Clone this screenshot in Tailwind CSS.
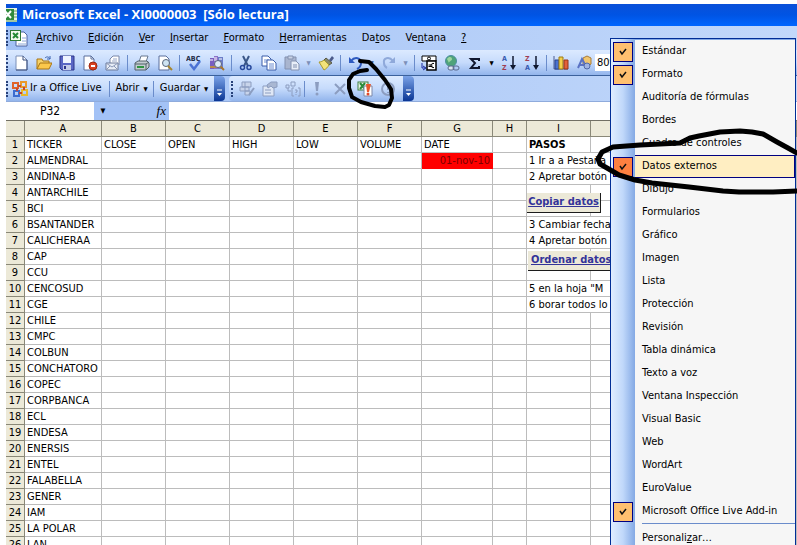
<!DOCTYPE html>
<html lang="es">
<head>
  <meta charset="UTF-8">
  <meta name="viewport" content="width=device-width, initial-scale=1.0">
  <title>Microsoft Excel - XI0000003</title>
  <script src="https://cdn.jsdelivr.net/npm/@tailwindcss/browser@4"></script>
</head>
<body class="relative h-screen overflow-hidden bg-white pl-1.5 pt-1 font-['DejaVu_Sans_Condensed','DejaVu_Sans',sans-serif] text-[11px] text-black">

  <!-- Title bar -->
  <header class="flex h-[22px] items-center gap-1 overflow-hidden bg-linear-to-b from-[#0a50d8] via-[#0054e4] to-[#0066ff]">
    <svg class="-ml-1 h-4 w-4 shrink-0" viewBox="0 0 16 16"><rect x="1" y="1" width="14" height="14" fill="#e8f3e4"/><rect x="1" y="2" width="11" height="11" fill="#2f8a3c"/><path d="M3 4l6 7M9 4l-6 7" stroke="#fff" stroke-width="2"/><path d="M12 4h3M12 7h3M12 10h3M4 14h11" stroke="#5a9a60"/></svg>
    <h1 class="whitespace-pre font-['Open_Sans','Noto_Sans',sans-serif] text-[13px] font-bold text-white">Microsoft Excel - XI0000003  [Sólo lectura]</h1>
  </header>

  <!-- Menu bar -->
  <nav class="flex h-6 items-center bg-linear-to-r from-[#a3c2f6] to-[#c2d8fa]">
    <span class="h-4 w-1 border-l-2 border-dotted border-[#27417a]"></span>
    <svg class="mr-2 h-[18px] w-[18px]" viewBox="0 0 18 18"><path d="M6 3h8l3 3v11H6z" fill="#fff" stroke="#4a62a0"/><path d="M12 9h4M12 12h4M8 15h8" stroke="#8aa6d8"/><rect x=".5" y="1.500" width="10" height="10" fill="#f2faee" stroke="#2f7a36"/><path d="M3 4l5 5M8 4l-5 5" stroke="#248a34" stroke-width="2"/></svg>
    <div class="flex gap-[15px]">
      <a href="#"><u>A</u>rchivo</a>
      <a href="#"><u>E</u>dición</a>
      <a href="#"><u>V</u>er</a>
      <a href="#"><u>I</u>nsertar</a>
      <a href="#"><u>F</u>ormato</a>
      <a href="#"><u>H</u>erramientas</a>
      <a href="#">Da<u>t</u>os</a>
      <a href="#">Ve<u>n</u>tana</a>
      <a href="#"><u>?</u></a>
    </div>
  </nav>

  <!-- Standard toolbar -->
  <div class="flex h-[26px] items-center overflow-hidden border-b border-[#3b619c] bg-linear-to-b from-[#dceaff] via-[#c6dbfc] to-[#93b5ec] [&_button]:flex [&_button]:h-6 [&_button]:w-[23px] [&_button]:shrink-0 [&_button]:items-center [&_button]:justify-center [&_i]:ml-[3px] [&_i]:mr-0.5 [&_i]:h-4 [&_i]:w-px [&_i]:shrink-0 [&_i]:bg-[#6a8ccb] [&_svg]:h-4 [&_svg]:w-4">
    <span class="h-4 w-[3px] shrink-0 border-l-2 border-dotted border-[#27417a]"></span>
    <button aria-label="Nuevo"><svg viewBox="0 0 16 16"><path d="M3 1h7l4 4v10H3z" fill="#fff" stroke="#7b8fb8"/><path d="M10 1v4h4v10H3" fill="none" stroke="#3b4f7c"/></svg></button>
    <button aria-label="Abrir"><svg viewBox="0 0 16 16"><path d="M1 14V4h5l1 2h6v3" fill="#f6d26b" stroke="#a87414"/><path d="M1 14l3-6h12l-3 6z" fill="#fbc84c" stroke="#a87414"/><path d="M9 3c2-2 4-1 5 1m0-3v3h-3" fill="none" stroke="#3a63b0"/></svg></button>
    <button aria-label="Guardar"><svg viewBox="0 0 16 16"><path d="M1 1h14v14H3l-2-2z" fill="#5a66c4" stroke="#2c348a"/><path d="M4 1h8v7H4z" fill="#eef3ff"/><path d="M4 10h8v5H4z" fill="#c5cce8"/><path d="M5 11h2v3H5z" fill="#2c348a"/></svg></button>
    <button aria-label="Permiso"><svg viewBox="0 0 16 16"><path d="M2 1h7l3 3v11H2z" fill="#fff" stroke="#5b6f9c"/><path d="M9 1v3h3" fill="none" stroke="#5b6f9c"/><circle cx="11" cy="11" r="4" fill="#d9401f" stroke="#9c2810"/><path d="M9 11h4" stroke="#fff" stroke-width="2"/></svg></button>
    <button aria-label="Correo electrónico"><svg viewBox="0 0 16 16"><path d="M5 8V4l3-3h6v9" fill="#fff" stroke="#7a87a8"/><path d="M8 4h4M7 6h5" stroke="#9aa8c8"/><path d="M1 8h12v7H1z" fill="#e8edf6" stroke="#6a7898"/><path d="M1 8l6 4 6-4M1 15l4-4m8 4l-4-4" fill="none" stroke="#8a98b8"/></svg></button>
    <i></i>
    <button aria-label="Imprimir"><svg viewBox="0 0 16 16"><path d="M5 7l2-6h7l-2 6z" fill="#fff" stroke="#687890"/><path d="M1 8l3-2h9l2 2v4l-3 3H1z" fill="#c3ccd0" stroke="#526068"/><path d="M1 9h11l3-2M12 9v6" fill="none" stroke="#526068"/><path d="M3 12h7" stroke="#2e9440" stroke-width="2"/></svg></button>
    <button aria-label="Vista preliminar"><svg viewBox="0 0 16 16"><path d="M2 1h7l3 3v11H2z" fill="#fff" stroke="#5b6f9c"/><circle cx="9" cy="8" r="3.500" fill="#cfe4f2" stroke="#58677c"/><path d="M11 11l4 4" stroke="#a8862c" stroke-width="2"/></svg></button>
    <i></i>
    <button aria-label="Ortografía"><svg viewBox="0 0 16 16"><text x="0" y="6" font-size="7" font-weight="bold" fill="#222c48">ABC</text><path d="M4 9l4 5 6-8" fill="none" stroke="#4b72d4" stroke-width="2.500"/></svg></button>
    <button aria-label="Referencia"><svg viewBox="0 0 16 16"><path d="M1 3h4v11H1z" fill="#7a5ec0"/><path d="M5 1h4v13H5z" fill="#8c72c8"/><path d="M9 2h5v12H9z" fill="#6b7cc8"/><path d="M1 5h3M5 3h3M5 5h3M10 4h3" stroke="#fff"/><path d="M1 12h12" stroke="#b98a4a" stroke-width="2"/><circle cx="9" cy="9" r="3.500" fill="#dfeaf8" stroke="#58607c"/><path d="M12 12l3 3" stroke="#a8762c" stroke-width="2"/></svg></button>
    <i></i>
    <button aria-label="Cortar"><svg viewBox="0 0 16 16"><path d="M5 1l5 10M11 1L6 11" stroke="#3a5688" stroke-width="2"/><circle cx="4.500" cy="12.500" r="2" fill="none" stroke="#27489c" stroke-width="1.500"/><circle cx="11" cy="12.500" r="2" fill="none" stroke="#27489c" stroke-width="1.500"/></svg></button>
    <button aria-label="Copiar"><svg viewBox="0 0 16 16"><path d="M1 1h6l3 3v7H1z" fill="#fff" stroke="#3b5ca8"/><path d="M3 5h5M3 7h5" stroke="#6c8cd0"/><path d="M6 5h6l3 3v7H6z" fill="#fff" stroke="#3b5ca8"/><path d="M8 9h5M8 11h5M8 13h5" stroke="#6c8cd0"/></svg></button>
    <button aria-label="Pegar"><svg viewBox="0 0 16 16"><path d="M1 2h11v12H1z" fill="#a9b5cf" stroke="#8391b0"/><path d="M4 1h5v3H4z" fill="#c9d3e6" stroke="#8391b0"/><path d="M7 6h5l3 3v6H7z" fill="#e8eef8" stroke="#8391b0"/><path d="M9 10h4M9 12h4" stroke="#8391b0"/></svg></button>
    <span class="w-[11px] shrink-0 text-center text-[6px] text-[#7c8fb8]">▼</span>
    <button aria-label="Copiar formato"><svg viewBox="0 0 16 16"><path d="M11 5l3-4 2 2-3 4z" fill="#4b5a8a"/><path d="M8 3l6 5-3 2-5-5z" fill="#8b8b68" stroke="#5a5a48"/><path d="M6 5l5 5c-1 2-3 4-5 5L1 7c2 0 4-1 5-2z" fill="#f2e27a" stroke="#a89a30"/></svg></button>
    <i></i>
    <button aria-label="Deshacer"><svg viewBox="0 0 16 16"><path d="M2 2v6h6z" fill="#2f5bc0"/><path d="M4 6c4-5 10-3 10 2 0 3-2 5-4 6" fill="none" stroke="#2f5bc0" stroke-width="2"/></svg></button>
    <span class="w-[11px] shrink-0 text-center text-[6px] text-[#27417a]">▼</span>
    <button aria-label="Rehacer"><svg viewBox="0 0 16 16"><path d="M14 2v6H8z" fill="#8fa9da"/><path d="M12 6C8 1 2 3 3 8c0 2 1 4 3 5" fill="none" stroke="#8fa9da" stroke-width="2"/></svg></button>
    <span class="w-[11px] shrink-0 text-center text-[6px] text-[#7c8fb8]">▼</span>
    <i></i>
    <button aria-label="Conversión a euros"><svg viewBox="0 0 16 16"><path d="M1 1h14v5H1z" fill="#fff" stroke="#000"/><circle cx="8" cy="3.500" r="1.500" fill="none" stroke="#000"/><path d="M6 6h9v9H6z" fill="#fff" stroke="#000" stroke-width="1.500"/><path d="M13 8.500c-4-1-4 5 0 4M7.500 10h4M7.500 11.500h4" fill="none" stroke="#000"/><path d="M1 8v5h3M2 11l3 2-3 2" fill="none" stroke="#1c2ca0"/></svg></button>
    <button aria-label="Hipervínculo"><svg viewBox="0 0 16 16"><circle cx="7" cy="6" r="5.500" fill="#4fa37a" stroke="#4c8f9e"/><path d="M3 4c2-3 5-2 5 0s-3 2-3 4" fill="#9bd6a0"/><rect x="4" y="11" width="6" height="4" rx="2" fill="#dde5f0" stroke="#59698c"/><rect x="9" y="11" width="6" height="4" rx="2" fill="none" stroke="#59698c"/></svg></button>
    <button aria-label="Autosuma"><svg viewBox="0 0 16 16"><path d="M12 6V4H4l4 4-4 5h8v-2" fill="none" stroke="#101830" stroke-width="2"/></svg></button>
    <span class="w-[11px] shrink-0 text-center text-[6px]">▼</span>
    <button aria-label="Orden ascendente"><svg viewBox="0 0 16 16"><text x="1" y="6" font-size="7" font-weight="bold" fill="#3658b0">A</text><text x="1" y="15" font-size="7" font-weight="bold" fill="#a03c50">Z</text><path d="M12 1v12" stroke="#101830" stroke-width="1.500"/><path d="M9 10h6l-3 5z" fill="#101830"/></svg></button>
    <button aria-label="Orden descendente"><svg viewBox="0 0 16 16"><text x="1" y="6" font-size="7" font-weight="bold" fill="#a03c50">Z</text><text x="1" y="15" font-size="7" font-weight="bold" fill="#3658b0">A</text><path d="M12 1v12" stroke="#101830" stroke-width="1.500"/><path d="M9 10h6l-3 5z" fill="#101830"/></svg></button>
    <i></i>
    <button aria-label="Asistente para gráficos"><svg viewBox="0 0 16 16"><path d="M1 1v13h14" fill="none" stroke="#4c5c94"/><path d="M2 5h4v9H2z" fill="#4b72d0" stroke="#28428c"/><path d="M6 2h4v12H6z" fill="#f4d04c" stroke="#9c7a14"/><path d="M11 5h4v9h-4z" fill="#e2603a" stroke="#983414"/></svg></button>
    <button aria-label="Dibujo"><svg viewBox="0 0 16 16"><path d="M7 3l4-2 4 2v6l-4 3-4-3z" fill="#f0c670" stroke="#a87c38"/><path d="M2 13L6 4l5 9M3 10h6" fill="none" stroke="#5a72c4" stroke-width="2"/><circle cx="11" cy="11" r="3" fill="#a0b4e4" stroke="#5068a8"/></svg></button>
    <input type="text" aria-label="Zoom" value="80%" class="h-[17px] w-12 shrink-0 bg-white pl-0.5">
  </div>

  <!-- Office Live and external data toolbars -->
  <div class="flex h-[26px] items-center gap-1 border-b border-[#8fabdc] bg-linear-to-r from-[#a3c2f6] to-[#c2d8fa] [&_i]:h-4 [&_i]:w-px [&_i]:bg-[#6a8ccb]">
    <div class="flex h-full w-[219px] items-center rounded-r bg-linear-to-b from-[#dceaff] via-[#c6dbfc] to-[#93b5ec]">
      <span class="mr-0.5 h-4 w-1 border-l-2 border-dotted border-[#27417a]"></span>
      <button class="flex w-[97px] items-center gap-0.5 whitespace-nowrap">
        <svg class="h-4 w-4 shrink-0" viewBox="0 0 16 16" fill="none" stroke-width="2"><rect x="1" y="2" width="5" height="5" stroke="#e0632c"/><rect x="9" y="1" width="5" height="5" stroke="#e99a2c"/><rect x="2" y="10" width="5" height="5" stroke="#3b6cd0"/><rect x="10" y="9" width="5" height="5" stroke="#e8b92c"/><path d="M6 5h3M5 7v3M12 6v3M7 12h3" stroke="#c84830"/></svg>
        Ir a Office Live
      </button>
      <i></i>
      <button class="flex w-[43px] items-center justify-center gap-1">Abrir <span class="text-[6px]">▼</span></button>
      <i></i>
      <button class="flex grow items-center justify-center gap-1">Guardar <span class="text-[6px]">▼</span></button>
      <button aria-label="Opciones de barra" class="flex h-full w-[11px] items-end justify-center rounded-r bg-linear-to-b from-[#7ba2e7] to-[#0a3594] pb-1">
        <svg class="h-2 w-[7px]" viewBox="0 0 7 8"><path d="M1 1h5" stroke="#fff"/><path d="M1 4h5L3.500 7z" fill="#fff"/></svg>
      </button>
    </div>
    <div class="flex h-full w-[185px] items-center rounded bg-linear-to-b from-[#dceaff] via-[#c6dbfc] to-[#93b5ec] [&_button]:flex [&_button]:w-[23px] [&_button]:items-center [&_button]:justify-center [&_button_svg]:w-4">
      <span class="ml-0.5 h-4 w-1 border-l-2 border-dotted border-[#27417a]"></span>
      <button aria-label="Modificar consulta"><svg class="h-4" viewBox="0 0 16 16" fill="#c8d4ea" stroke="#8c9dc0"><path d="M3 1h9v5H3zM1 6h9v4H1zM6 10h5v4H6zM6 1v9"/><path d="M10 14l5-7" stroke-width="2"/></svg></button>
      <button aria-label="Propiedades"><svg class="h-4" viewBox="0 0 16 16" fill="#dfe7f5" stroke="#8c9dc0"><path d="M1 5h11v10H1zM3 9h6M3 12h6"/><path d="M5 4l4-3h6v5l-4 1-2-2-3 2z" fill="#a9b7d2"/></svg></button>
      <button aria-label="Parámetros"><svg class="h-4" viewBox="0 0 16 16" fill="none" stroke="#8c9dc0"><path d="M1 4h3v3H1zM6 1h4v4H6zM3 7v3h3"/><path d="M9 7H7v8h2M13 7h2v8h-2M10 9h2v2h-1v1M11 13v1"/></svg></button>
      <i></i>
      <button aria-label="Actualizar"><svg class="h-4" viewBox="0 0 16 16" fill="#8c9dc0"><path d="M6 1h4L9 10H7z"/><circle cx="8" cy="13" r="1.500"/></svg></button>
      <button aria-label="Cancelar actualización"><svg class="h-4" viewBox="0 0 16 16" stroke="#8c9dc0" stroke-width="2"><path d="M3 3l10 10M13 3L3 13"/></svg></button>
      <button aria-label="Actualizar todo" class="ml-0.5"><svg class="h-4" viewBox="0 0 16 16"><rect x="1" y="1" width="10" height="8" fill="#eaf5e6" stroke="#3f7f42"/><path d="M3 2l5 6M8 2L3 8" stroke="#2c8c3c" stroke-width="2"/><path d="M7 5h8v10H7z" fill="#fff" stroke="#7c88a8"/><path d="M9 3h5l-2 8h-2z" fill="#e8582c"/><circle cx="11" cy="13" r="1.500" fill="#e0482c"/></svg></button>
      <button aria-label="Estado"><svg class="h-4" viewBox="0 0 16 16" fill="none" stroke="#8c9dc0" stroke-width="2"><circle cx="8" cy="8" r="6"/><path d="M8 4v5M8 11v1"/></svg></button>
      <button aria-label="Opciones de barra" class="ml-auto h-full rounded-r bg-linear-to-b from-[#7ba2e7] to-[#0a3594] !w-[11px] !items-end pb-1">
        <svg class="h-2 !w-[7px]" viewBox="0 0 7 8"><path d="M1 1h5" stroke="#fff"/><path d="M1 4h5L3.500 7z" fill="#fff"/></svg>
      </button>
    </div>
  </div>

  <!-- Formula bar -->
  <div class="flex h-[18px] bg-[#a3c2f6]">
    <input type="text" aria-label="Cuadro de nombres" value="P32" class="w-[88px] bg-white text-center text-xs">
    <button aria-label="Lista de nombres" class="flex w-[18px] items-center justify-center text-[7px]">▼</button>
    <label for="formula" class="ml-auto pr-[3px] font-['Liberation_Serif',serif] text-[13px] italic leading-[18px]">fx</label>
    <input id="formula" type="text" class="w-[calc(100%-163px)] bg-white">
  </div>

  <!-- Sheet -->
  <main class="relative">
    <table class="w-full table-fixed border-separate border-spacing-0 border-t border-[#716f64] leading-[15px]">
      <colgroup>
        <col class="w-[19px]"><col class="w-[77px]"><col class="w-16"><col class="w-16"><col class="w-16"><col class="w-16"><col class="w-16"><col class="w-[71px]"><col class="w-[34px]"><col class="w-16"><col>
      </colgroup>
      <thead id="columns"></thead>
      <tbody id="rows"></tbody>
    </table>
    <button class="absolute left-[521px] top-[73px] h-5 w-[74px] border-b border-r border-[#1c1c1c] bg-[#ece9d8] font-bold text-[#333399] underline">Copiar datos</button>
    <button class="absolute left-[522px] top-[131px] h-5 w-[90px] whitespace-nowrap border-b border-r border-[#1c1c1c] bg-[#ece9d8] pl-[3px] text-left font-bold text-[#333399] underline">Ordenar datos</button>
  </main>

  <!-- Toolbar list -->
  <div class="absolute left-[610px] top-[38px] w-[186px] border border-[#002d96] bg-linear-to-r from-[#e0edff] via-[#c0d8fa] via-[12px] to-[#84a9e4] to-[24px] pt-px">
    <ul id="toolbars"></ul>
    <div class="ml-6 bg-[#f6f6f6] pl-[7px]">
      <hr class="border-[#6a8ccb]">
      <button class="h-7 leading-[26px]">Personali<u>z</u>ar…</button>
    </div>
  </div>

  <!-- Pen marks -->
  <svg class="pointer-events-none absolute left-0 top-0 h-[545px] w-[797px]" viewBox="0 0 797 545" fill="none" stroke="#000" stroke-width="4" stroke-linecap="round" stroke-linejoin="round">
    <path d="M360 61l9 1 7 7 9 11 6 9 1 9-3 7-4 2-10-1-14-4-9-5-3-9v-8l4-6 7-3 7-1"/>
    <path stroke-width="5" d="M797 153l-9-5-11-6-14-8-11-2-12-1-20 1-21 4-9 2-10 5-40 2-27 2-11 5-4 7 2 5 7 4 12 7 16 5 17 3 37 4 34 4 16 1h34l24-1"/>
  </svg>

  <script>
    const letters = ['A', 'B', 'C', 'D', 'E', 'F', 'G', 'H', 'I', ''];
    const tickers = ['ALMENDRAL', 'ANDINA-B', 'ANTARCHILE', 'BCI', 'BSANTANDER', 'CALICHERAA', 'CAP', 'CCU', 'CENCOSUD', 'CGE', 'CHILE', 'CMPC', 'COLBUN', 'CONCHATORO', 'COPEC', 'CORPBANCA', 'ECL', 'ENDESA', 'ENERSIS', 'ENTEL', 'FALABELLA', 'GENER', 'IAM', 'LA POLAR', 'LAN'];
    const steps = { 2: '1 Ir a a Pestaña', 3: '2 Apretar botón', 6: '3 Cambiar fecha', 7: '4 Apretar botón', 10: '5 en la hoja "M', 11: '6 borar todos lo' };

    const head = 'border-b border-r border-[#8a8878] bg-[#ece9d8] p-0 text-center font-normal';
    const cell = 'h-4 overflow-hidden whitespace-nowrap border-b border-r border-[#bcbcbc] bg-white p-0 pl-0.5';

    document.getElementById('columns').innerHTML =
      `<tr><th class="h-4 ${head}"></th>${letters.map(l => `<th scope="col" class="h-4 ${head}">${l}</th>`).join('')}</tr>`;

    let html = `<tr><th scope="row" class="${head}">1</th>` +
      ['TICKER', 'CLOSE', 'OPEN', 'HIGH', 'LOW', 'VOLUME', 'DATE', '', '<b>PASOS</b>', ''].map(t => `<td class="${cell}">${t}</td>`).join('') + '</tr>';
    tickers.forEach((ticker, i) => {
      const n = i + 2;
      const blank = `<td class="${cell}"></td>`;
      html += `<tr><th scope="row" class="${head}">${n}</th><td class="${cell}">${ticker}</td>${blank.repeat(5)}`;
      html += n === 2 ? '<td class="h-4 border-b border-r border-[#f00] bg-[#f00] p-0 pr-0.5 text-right text-[#7a0000]">01-nov-10</td>' : blank;
      html += blank + (steps[n] ? `<td colspan="2" class="${cell}">${steps[n]}</td>` : blank.repeat(2)) + '</tr>';
    });
    document.getElementById('rows').innerHTML = html;

    // Toolbar list entries
    const toolbars = ['Estándar', 'Formato', 'Auditoría de fórmulas', 'Bordes', 'Cuadro de controles', 'Datos externos', 'Dibujo', 'Formularios', 'Gráfico', 'Imagen', 'Lista', 'Protección', 'Revisión', 'Tabla dinámica', 'Texto a voz', 'Ventana Inspección', 'Visual Basic', 'Web', 'WordArt', 'EuroValue', 'Microsoft Office Live Add-in'];
    const checked = ['Estándar', 'Formato', 'Datos externos', 'Microsoft Office Live Add-in'];
    const box = 'm-0 h-5 w-5 appearance-none border border-[#000080]';
    document.getElementById('toolbars').innerHTML = toolbars.map(name => {
      const active = name === 'Datos externos';
      const on = checked.includes(name);
      return `<li><label class="flex h-[23px] items-center">
        <span class="relative flex h-full w-6 shrink-0 items-center justify-center">
          <input type="checkbox" ${on ? 'checked' : ''} class="${on ? box : 'm-0 h-5 w-5 appearance-none'} ${active ? 'bg-[#fe8040]' : on ? 'bg-[#ffc06f]' : ''}">
          ${on ? '<svg class="pointer-events-none absolute h-2 w-2" viewBox="0 0 8 8" fill="none" stroke="#101010" stroke-width="1.500"><path d="M1 3l2 3 4-5"/></svg>' : ''}
        </span>
        <span class="flex h-full grow items-center whitespace-nowrap ${active ? 'border border-l-0 border-[#000080] bg-[#ffeec2]' : 'bg-[#f6f6f6]'} pl-[7px]">${name}</span>
      </label></li>`;
    }).join('');
  </script>
</body>
</html>
